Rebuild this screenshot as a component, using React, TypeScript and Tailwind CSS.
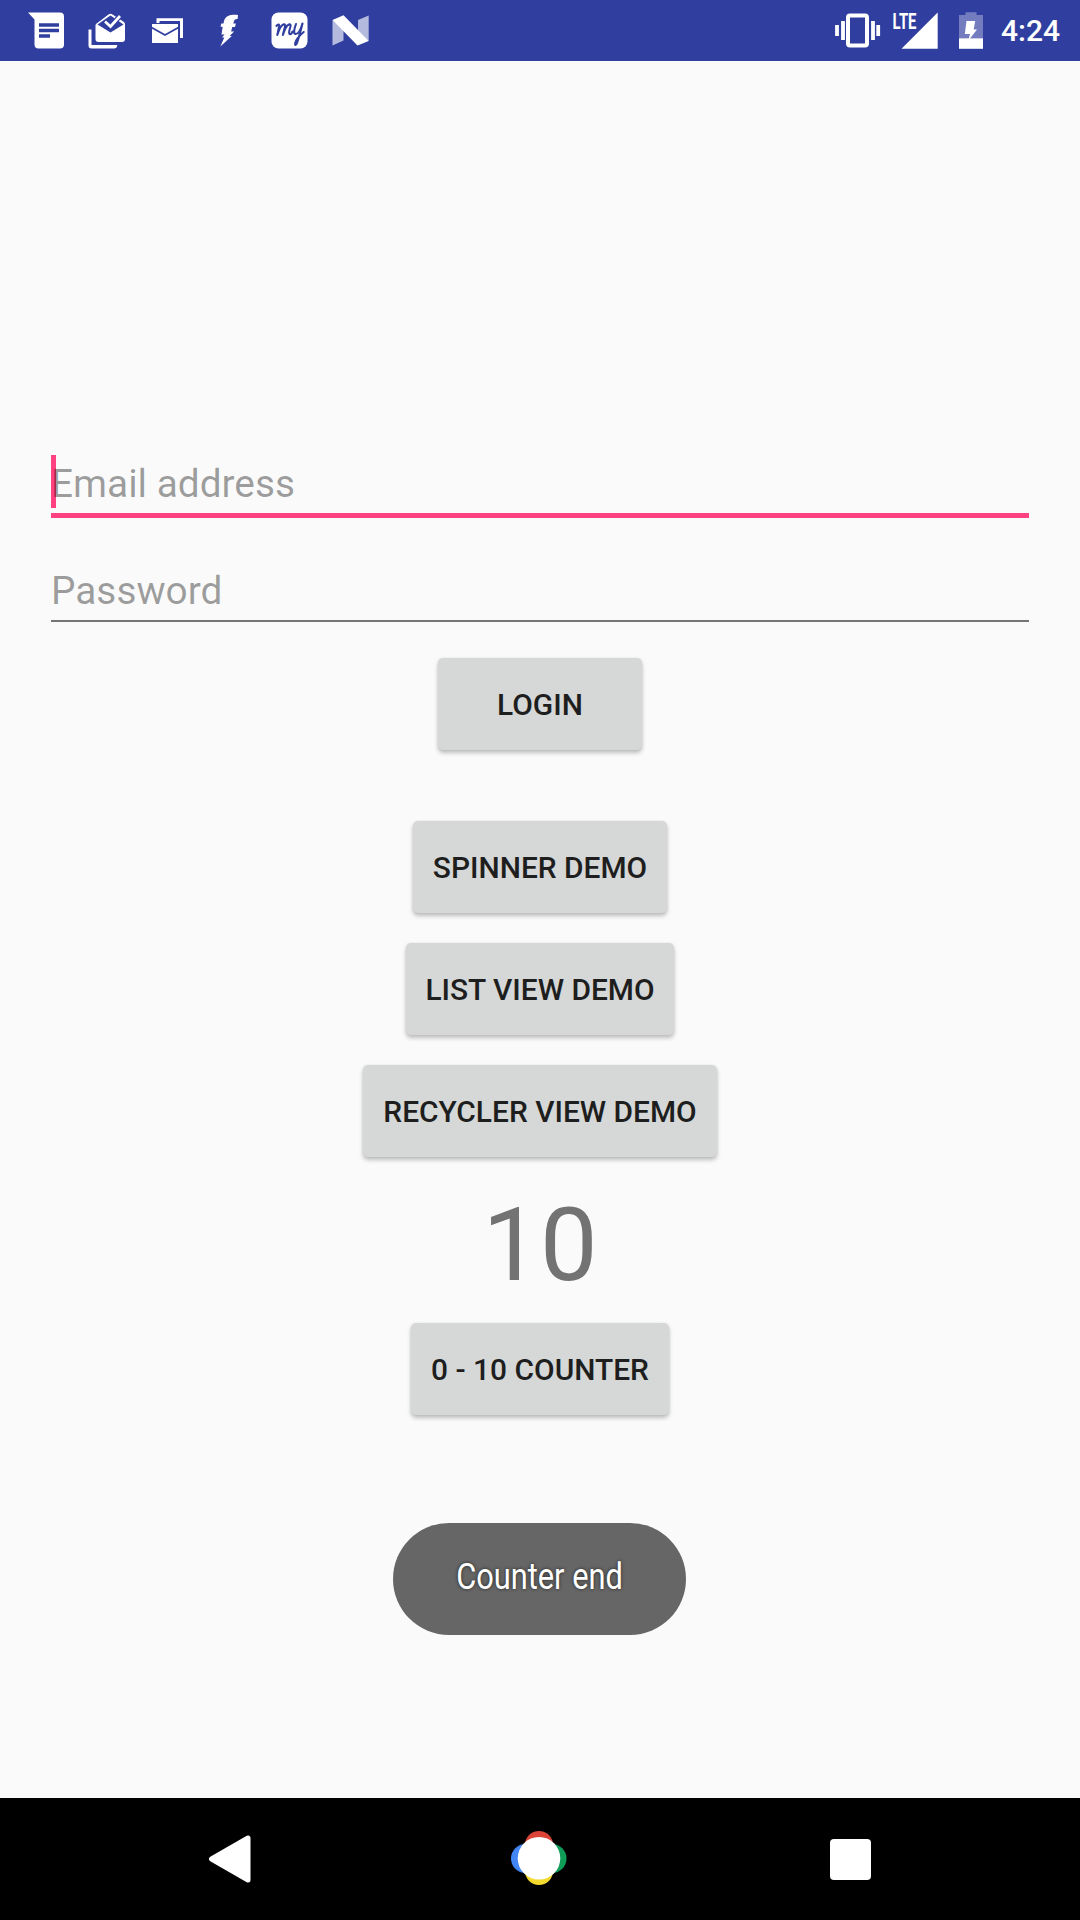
import type { ReactNode } from "react";

function MessageIcon() {
  return (
    <svg className="h-[61px] w-[61px]" viewBox="16 0 61 61">
      <path d="M28 12.500h32a4 4 0 0 1 4 4v28a4 4 0 0 1-4 4H38.500a4 4 0 0 1-4-4V19.500z" fill="#fff" />
      <path d="M39 25h20M39 30.500h20M39 36h11" stroke="#303f9f" strokeWidth="3.400" />
    </svg>
  );
}

function InboxIcon() {
  return (
    <svg className="h-[61px] w-[61px]" viewBox="77 0 61 61">
      <path d="M88.500 29.500h3v15.500h25.800q-.3 3.500-3.300 3.500H91.500q-3 0-3-3z" fill="#fff" />
      <path d="M96 24 108.500 14.500Q110.500 13 112.500 14.500L124 22q1 1 1 2.500V39q0 3-3 3H98.500q-3 0-3-3V25z" fill="#fff" />
      <path d="M97.500 24.500 110.500 15.500 123.500 24.500 110.500 32.500z" fill="#303f9f" />
      <path d="M105.500 21.500 110.500 26.500 120 16" fill="none" stroke="#303f9f" strokeWidth="5" />
      <path d="M105 21.500 110.500 26.500 120 16" fill="none" stroke="#fff" strokeWidth="2.700" />
    </svg>
  );
}

function MailStackIcon() {
  return (
    <svg className="h-[61px] w-[61px]" viewBox="138 0 61 61">
      <path d="M156.500 18.200h26.500V38h-3V21h-20.500v2h-3z" fill="#fff" />
      <path d="M152 24h26v19h-26z" fill="#fff" />
      <path d="M151.500 27.500 165 35 178.500 27.500" fill="none" stroke="#303f9f" strokeWidth="1.700" />
    </svg>
  );
}

function BoltIcon() {
  return (
    <svg className="h-[61px] w-[61px]" viewBox="199 0 61 61">
      <path d="M238 15c-8-.7-12.500 1-14 6l-.5 2.500h-2.200l-.8 3.200h2.200l-1.200 7.800h3l-2.500 3h2.300L220.300 46.500l11.500-10.500h-2.200l4.500-4.500h-3l1.200-4.500h2.700l.9-3.400h-2.600c.8-3.600 1.300-4.400 4.300-4.600z" fill="#fff" />
    </svg>
  );
}

function MyIcon() {
  return (
    <svg className="h-[61px] w-[61px]" viewBox="260 0 61 61">
      <rect x="271.500" y="12.500" width="36" height="36" rx="7" fill="#fff" />
      <path
        d="M276.500 26c1.500-2 3-2 2.600.5L277.300 35c1.500-5 3.500-9.500 6-10.500s2 1.500 1.200 4l-1.600 6.500c1.500-5 3.700-9.500 6-10.500s1.900 1.500 1 4-1.200 5.700.3 5.700 2-1.700 2.300-2.700M296 24c-1.500 4-3 9.500-.6 10 3 .5 5.600-5.500 7.100-10.500-2 8-4.500 16.500-5.500 19.500s-2.500 2.500-1.600-.5c1-3.500 4-7 8.300-10.500"
        fill="none" stroke="#303f9f" strokeWidth="2.100" strokeLinecap="round" strokeLinejoin="round"
      />
    </svg>
  );
}

function NougatIcon() {
  return (
    <svg className="h-[61px] w-[61px]" viewBox="321 0 61 61">
      <path d="M332.500 20 343.500 28V40.500L332.500 45.500zM358 20 368.700 15.500V41L358 33z" fill="#b4b9de" />
      <path d="M332.500 20 343.500 15.300 368.700 41 357.500 45.500z" fill="#fff" />
    </svg>
  );
}

function VibrateIcon() {
  return (
    <svg className="h-[61px] w-[49px]" viewBox="833 0 49 61">
      <rect x="848" y="15.500" width="19" height="30" rx="2" fill="none" stroke="#fff" strokeWidth="4" />
      <path d="M837 25v11M843 21v19M873 21v19M878.200 25v11" stroke="#fff" strokeWidth="3.800" />
    </svg>
  );
}

function SignalIcon() {
  return (
    <svg className="h-[61px] w-[61px]" viewBox="882 0 61 61">
      <path d="M901.500 48.700 937.700 12.500v36.200z" fill="#fff" />
      <text x="892.500" y="29" fontSize="21.500" fontWeight="700" textLength="24" lengthAdjust="spacingAndGlyphs" fill="#fff">LTE</text>
    </svg>
  );
}

function BatteryIcon() {
  return (
    <svg className="h-[61px] w-[59px]" viewBox="943 0 59 61">
      <path d="M959 15h6.500v-2.700h11V15h6.500v23.500h-24z" fill="#fff" opacity=".32" />
      <path d="M959 38.300h24v10.500h-24z" fill="#fff" />
      <path d="M966.500 21h8.700l-1.500 8.500h3.300l-7.400 9.500h-1l1.500-5h-5.300z" fill="#fff" />
    </svg>
  );
}

function StatusBar() {
  return (
    <header className="flex h-[61px] shrink-0 justify-between bg-[#303f9f] text-white">
      <div className="flex pl-4">
        <MessageIcon />
        <InboxIcon />
        <MailStackIcon />
        <BoltIcon />
        <MyIcon />
        <NougatIcon />
      </div>
      <div className="flex">
        <VibrateIcon />
        <SignalIcon />
        <BatteryIcon />
        <span className="-ml-px w-[79px] text-[30px] leading-[61px] font-medium">4:24</span>
      </div>
    </header>
  );
}

function DemoButton({ className, children }: { className: string; children: ReactNode }) {
  return (
    <button
      className={`flex h-[92px] shrink-0 items-center justify-center rounded-[5px] bg-[#d6d8d7] pt-px text-[29.900px] leading-none font-medium whitespace-nowrap text-[#1d1e1d] shadow-[0_3px_4px_rgba(0,0,0,0.24),0_0_3px_rgba(0,0,0,0.07)] ${className}`}
    >
      {children}
    </button>
  );
}

function NavBar() {
  return (
    <nav className="flex h-[122px] shrink-0 items-center justify-between bg-black pr-[209px] pl-[209px]">
      <svg className="h-[50px] w-[44px]" viewBox="0 0 44 50">
        <path d="M2.500 25 39 4v42z" fill="#fff" stroke="#fff" strokeWidth="5" strokeLinejoin="round" />
      </svg>
      <svg className="mr-1.5 h-14 w-14" viewBox="0 0 56 56">
        <circle cx="28" cy="14" r="14" fill="#db4437" />
        <circle cx="14.500" cy="27.500" r="14.500" fill="#4285f4" />
        <circle cx="41" cy="27.500" r="14.500" fill="#0f9d58" />
        <circle cx="28" cy="40" r="14" fill="#f4d92f" />
        <circle cx="28" cy="27.300" r="21.300" fill="#fff" />
      </svg>
      <div className="h-[41px] w-[41px] rounded-[4px] bg-white" />
    </nav>
  );
}

export default function App() {
  return (
    <div className="flex h-[1920px] w-[1080px] flex-col bg-[#fafafa] font-['Roboto',sans-serif]">
      <StatusBar />
      <main className="flex min-h-0 flex-1 flex-col items-center pt-[394px]">
        <div className="relative flex h-[63px] w-[978px] shrink-0 border-b-[5px] border-[#ff4081]">
          <span className="absolute top-0 left-0 h-[53px] w-[5px] bg-[#ff4081]" />
          <span className="relative pt-[5px] text-[38.800px] leading-[48px] text-black/[.38]">Email address</span>
        </div>
        <div className="mt-[44px] flex h-[60px] w-[978px] shrink-0 border-b-2 border-[#757575]">
          <span className="pt-[5px] text-[38.800px] leading-[48px] text-black/[.38]">Password</span>
        </div>
        <DemoButton className="mt-9 w-[204px]">LOGIN</DemoButton>
        <DemoButton className="mt-[71px] w-[254px]">SPINNER DEMO</DemoButton>
        <DemoButton className="mt-[30px] w-[268px]">LIST VIEW DEMO</DemoButton>
        <DemoButton className="mt-[30px] w-[354px]">RECYCLER VIEW DEMO</DemoButton>
        <div className="mt-[28px] h-[120px] shrink-0 text-[102.500px] leading-[120px] text-[#737373]">10</div>
        <DemoButton className="mt-[18px] w-[258px]">0 - 10 COUNTER</DemoButton>
        <div className="mt-[108px] mr-px flex h-[112px] w-[293px] shrink-0 items-center justify-center rounded-full bg-[#666] pb-1 text-[36px] whitespace-nowrap text-white">
          <span className="scale-x-[.855] [text-shadow:0_0_4px_rgba(0,0,0,0.7)]">Counter end</span>
        </div>
      </main>
      <NavBar />
    </div>
  );
}
